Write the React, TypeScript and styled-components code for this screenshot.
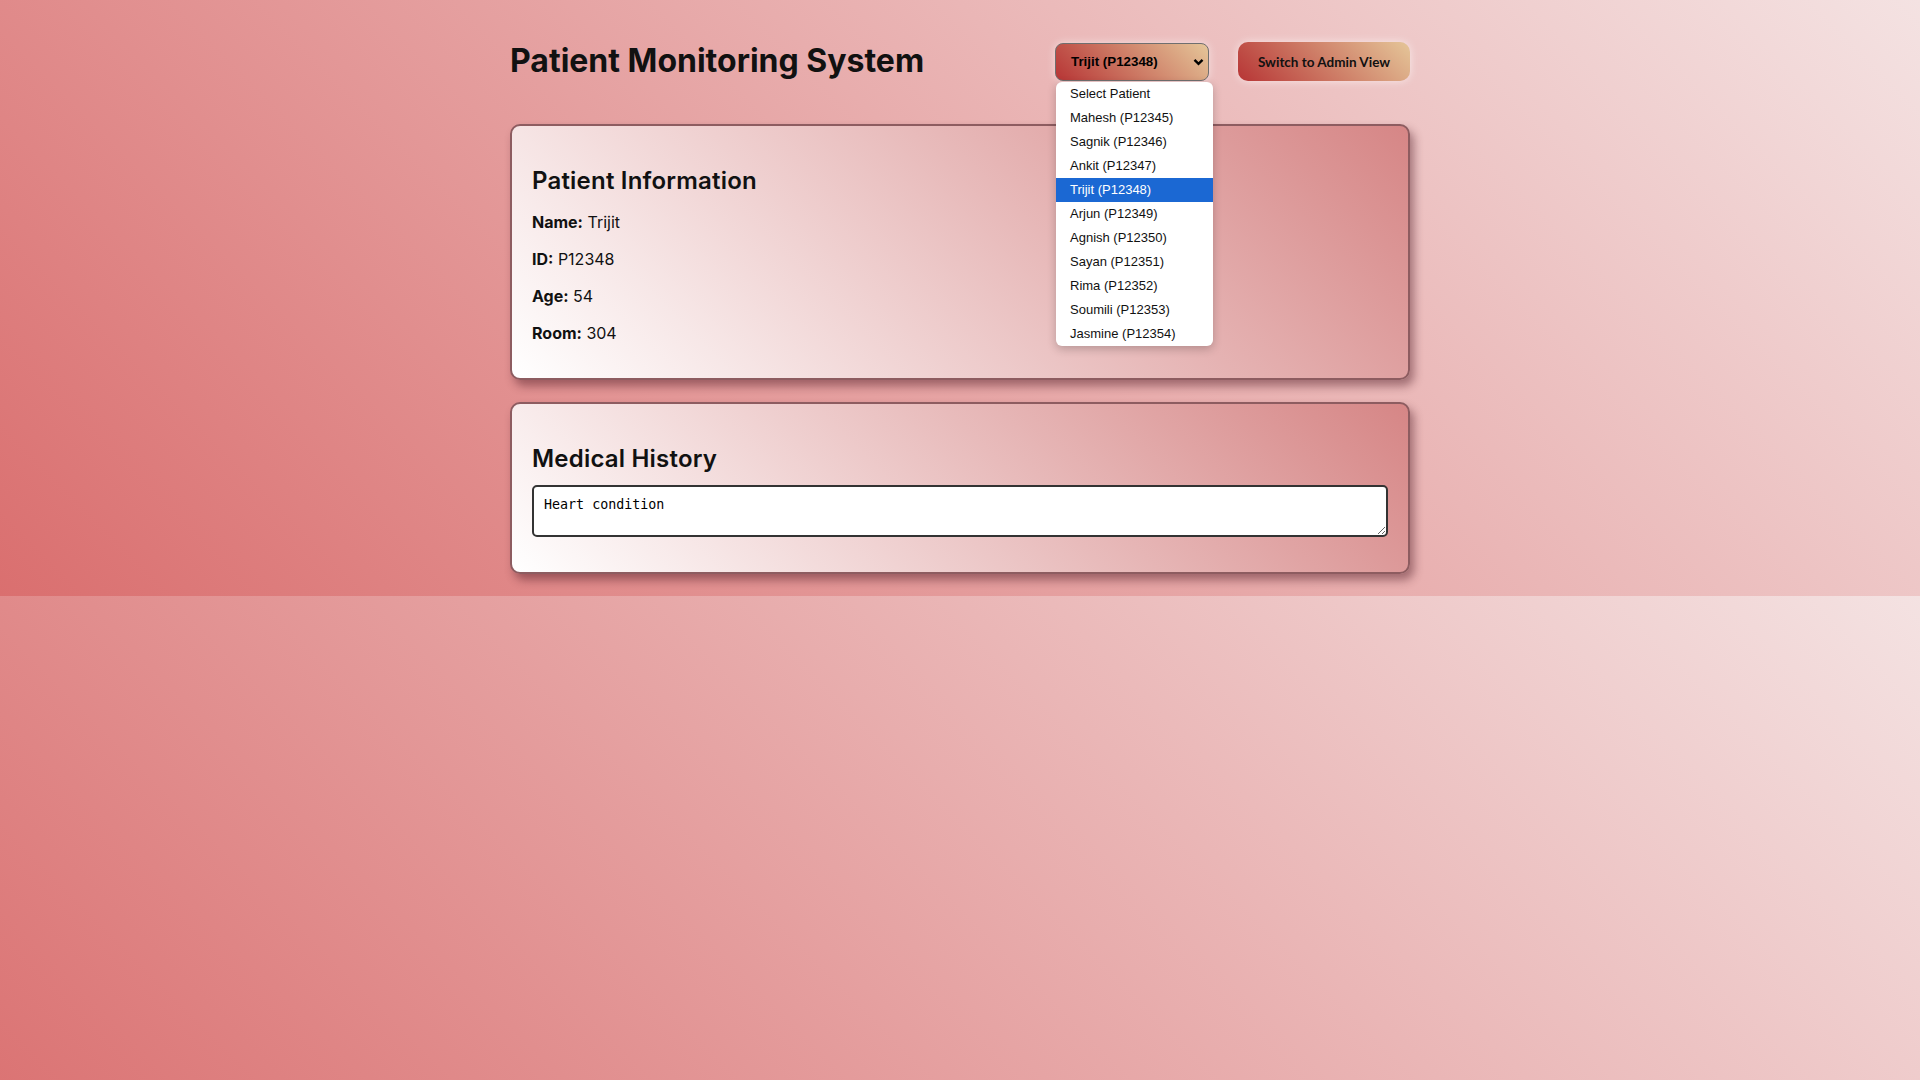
import React from 'react';
import styled, { createGlobalStyle } from 'styled-components';

const GlobalStyle = createGlobalStyle`
  html, body {
    margin: 0;
    padding: 0;
  }
  body {
    font-family: Inter, "Liberation Sans", sans-serif;
    color: #111;
    background: linear-gradient(45deg, #da6f6f, #f4e2e2);
  }
`;

const patients = [
  { id: 'P12345', name: 'Mahesh' },
  { id: 'P12346', name: 'Sagnik' },
  { id: 'P12347', name: 'Ankit' },
  { id: 'P12348', name: 'Trijit' },
  { id: 'P12349', name: 'Arjun' },
  { id: 'P12350', name: 'Agnish' },
  { id: 'P12351', name: 'Sayan' },
  { id: 'P12352', name: 'Rima' },
  { id: 'P12353', name: 'Soumili' },
  { id: 'P12354', name: 'Jasmine' }
];

const Wrapper = styled.div`
  max-width: 900px;
  margin: 0 auto;
  padding: 20px 0 22px;
`;

const Header = styled.header`
  display: flex;
  align-items: center;
  justify-content: space-between;
  margin-bottom: 20px;
`;

const Title = styled.h1`
  margin: 21.44px 0;
  font-size: 32px;
  line-height: 40.8px;
  font-weight: 700;
`;

const Controls = styled.div`
  display: flex;
  align-items: center;
  gap: 29px;
`;

const SelectWrap = styled.div`
  position: relative;
`;

const SelectBox = styled.div`
  box-sizing: border-box;
  width: 154px;
  height: 38.5px;
  display: flex;
  align-items: center;
  justify-content: space-between;
  padding: 0 4px 0 15px;
  border: 1px solid #6f6f6f;
  border-radius: 8px;
  background: linear-gradient(45deg, #b73535, #e5c699);
  box-shadow: 0 0 8px rgba(255, 255, 255, 0.55);
  font-family: "Liberation Sans", Arial, sans-serif;
  font-size: 13.33px;
  font-weight: 700;
  color: #000;
`;

const OptionList = styled.ul`
  position: absolute;
  top: 39.5px;
  left: 1px;
  width: 157px;
  margin: 0;
  padding: 0;
  list-style: none;
  background: #fff;
  border-radius: 6px;
  overflow: hidden;
  box-shadow: 0 3px 10px rgba(0, 0, 0, 0.22);
  z-index: 5;
`;

const Option = styled.li<{ $active?: boolean }>`
  height: 24px;
  line-height: 24px;
  padding-left: 14px;
  font-family: "Liberation Sans", Arial, sans-serif;
  font-size: 13px;
  color: ${p => (p.$active ? '#fff' : '#111')};
  background: ${p => (p.$active ? '#1b68d3' : 'transparent')};
`;

const AdminButton = styled.button`
  width: 172px;
  height: 39px;
  border: none;
  border-radius: 10px;
  background: linear-gradient(45deg, #b73535, #e5c699);
  box-shadow: 0 0 8px rgba(255, 255, 255, 0.6);
  font-family: Lato, "Liberation Sans", sans-serif;
  font-size: 13.5px;
  font-weight: 700;
  color: #111;
  cursor: pointer;
`;

const Cards = styled.main`
  display: flex;
  flex-direction: column;
  gap: 22px;
`;

const Card = styled.section`
  border: 2px solid #8d5c60;
  border-radius: 10px;
  padding: 20px 20px 18px;
  background: linear-gradient(45deg, #ffffff, #d68686);
  box-shadow: 4px 6px 10px rgba(70, 20, 30, 0.45);
`;

const CardTitle = styled.h2`
  margin: 20px 0 10px;
  font-size: 24px;
  line-height: 30.6px;
  font-weight: 600;
  letter-spacing: 0.2px;
`;

const InfoLine = styled.p`
  margin: 16px 0;
  font-size: 16px;
  line-height: 21px;

  strong {
    font-weight: 700;
  }
`;

const History = styled.textarea`
  display: block;
  box-sizing: border-box;
  width: 100%;
  height: 52.5px;
  margin: 0 0 16.5px;
  padding: 10px;
  border: 2px solid #333;
  border-radius: 5px;
  background: #fff;
  font-family: "DejaVu Sans Mono", monospace;
  font-size: 13.33px;
  color: #000;
`;

const Chevron = () => (
  <svg width="11" height="8" viewBox="0 0 11 8">
    <path d="M1.5 1.8 L5.5 5.8 L9.5 1.8" fill="none" stroke="#000" strokeWidth="2.4" />
  </svg>
);

export default function App() {
  const current = patients[3];

  return (
    <>
      <GlobalStyle />
      <Wrapper>
        <Header>
          <Title>Patient Monitoring System</Title>
          <Controls>
            <SelectWrap>
              <SelectBox>
                {current.name} ({current.id})
                <Chevron />
              </SelectBox>
              <OptionList>
                <Option>Select Patient</Option>
                {patients.map(p => (
                  <Option key={p.id} $active={p.id === current.id}>
                    {p.name} ({p.id})
                  </Option>
                ))}
              </OptionList>
            </SelectWrap>
            <AdminButton>Switch to Admin View</AdminButton>
          </Controls>
        </Header>

        <Cards>
          <Card>
            <CardTitle>Patient Information</CardTitle>
            <InfoLine><strong>Name:</strong> {current.name}</InfoLine>
            <InfoLine><strong>ID:</strong> {current.id}</InfoLine>
            <InfoLine><strong>Age:</strong> 54</InfoLine>
            <InfoLine><strong>Room:</strong> 304</InfoLine>
          </Card>
          <Card>
            <CardTitle>Medical History</CardTitle>
            <History defaultValue="Heart condition" />
          </Card>
        </Cards>
      </Wrapper>
    </>
  );
}
